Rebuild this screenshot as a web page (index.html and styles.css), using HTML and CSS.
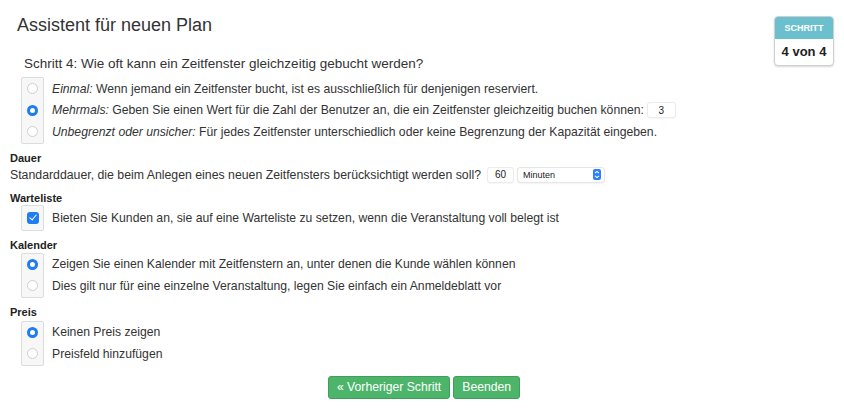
FILE: index.html
```html
<!DOCTYPE html>
<html lang="de">
<head>
<meta charset="UTF-8">
<meta name="viewport" content="width=device-width, initial-scale=1.0">
<title>Assistent für neuen Plan</title>
<link rel="stylesheet" href="styles.css">
</head>
<body>
<div class="page">

  <!-- Step indicator -->
  <div class="stepBox">
    <div class="stepHead">SCHRITT</div>
    <div class="stepBody">4 von 4</div>
  </div>

  <h1 class="title">Assistent für neuen Plan</h1>

  <div class="question">Schritt 4: Wie oft kann ein Zeitfenster gleichzeitig gebucht werden?</div>
  <div class="choices first">
    <div class="marks">
      <div class="mark"><input type="radio" name="capacity"></div>
      <div class="mark"><input type="radio" name="capacity" checked></div>
      <div class="mark"><input type="radio" name="capacity"></div>
    </div>
    <div class="texts">
      <div class="row"><em>Einmal:</em>&nbsp;Wenn jemand ein Zeitfenster bucht, ist es ausschließlich für denjenigen reserviert.</div>
      <div class="row"><em>Mehrmals:</em>&nbsp;Geben Sie einen Wert für die Zahl der Benutzer an, die ein Zeitfenster gleichzeitig buchen können: <input class="smallInput users" type="text" value="3"></div>
      <div class="row"><em>Unbegrenzt oder unsicher:</em>&nbsp;Für jedes Zeitfenster unterschiedlich oder keine Begrenzung der Kapazität eingeben.</div>
    </div>
  </div>

  <div class="label">Dauer</div>
  <div class="line">Standarddauer, die beim Anlegen eines neuen Zeitfensters berücksichtigt werden soll? <input class="smallInput duration" type="text" value="60">
    <span class="select">Minuten
      <svg width="8" height="11" viewBox="0 0 8 11"><rect width="8" height="11" rx="2" fill="#2d7ff9"/><path d="M2 4.2 L4 2.4 L6 4.2 M2 6.8 L4 8.6 L6 6.8" stroke="#fff" stroke-width="1.1" fill="none"/></svg>
    </span>
  </div>

  <div class="label">Warteliste</div>
  <div class="choices tight">
    <div class="marks">
      <div class="mark tall"><input type="checkbox" checked></div>
    </div>
    <div class="texts">
      <div class="row tall">Bieten Sie Kunden an, sie auf eine Warteliste zu setzen, wenn die Veranstaltung voll belegt ist</div>
    </div>
  </div>

  <div class="label">Kalender</div>
  <div class="choices">
    <div class="marks">
      <div class="mark"><input type="radio" name="calendar" checked></div>
      <div class="mark"><input type="radio" name="calendar"></div>
    </div>
    <div class="texts">
      <div class="row">Zeigen Sie einen Kalender mit Zeitfenstern an, unter denen die Kunde wählen können</div>
      <div class="row">Dies gilt nur für eine einzelne Veranstaltung, legen Sie einfach ein Anmeldeblatt vor</div>
    </div>
  </div>

  <div class="label">Preis</div>
  <div class="choices loose">
    <div class="marks">
      <div class="mark"><input type="radio" name="price" checked></div>
      <div class="mark"><input type="radio" name="price"></div>
    </div>
    <div class="texts">
      <div class="row">Keinen Preis zeigen</div>
      <div class="row">Preisfeld hinzufügen</div>
    </div>
  </div>

  <div class="buttons">
    <button class="greenButton">« Vorheriger Schritt</button>
    <button class="greenButton">Beenden</button>
  </div>

</div>
</body>
</html>
```

FILE: styles.css
```css
body {
  margin: 0;
  padding: 0;
  background-color: #fff;
  font-family: "Liberation Sans", Arial, Helvetica, sans-serif;
  color: #333;
}

.page {
  padding: 0 10px 0 10px;
}

/* Step box in the top right corner */
.stepBox {
  float: right;
  margin-top: 16px;
  width: 58px;
  border: 1px solid #cfcfcf;
  border-radius: 4px;
  box-shadow: 0 1px 2px rgba(0, 0, 0, 0.15);
  overflow: hidden;
  text-align: center;
  background-color: #fff;
}
.stepHead {
  background-color: #6cbfcd;
  color: #fff;
  font-size: 9px;
  font-weight: bold;
  line-height: 22px;
}
.stepBody {
  font-size: 13px;
  font-weight: bold;
  line-height: 26px;
  color: #222;
}

.title {
  margin: 0;
  padding: 14px 0 0 7px;
  font-size: 18px;
  line-height: 22px;
  font-weight: normal;
  color: #333;
}

.question {
  margin: 20px 0 0 14px;
  font-size: 13.5px;
  line-height: 16px;
}

/* Radio / checkbox groups */
.choices {
  display: flex;
  margin-left: 11px;
  margin-top: 1px;
  font-size: 12.2px;
}
.choices.first {
  margin-top: 5px;
}
.choices.tight {
  margin-top: 0;
}
.choices.loose {
  margin-top: 2px;
}
.marks {
  width: 21px;
  background-color: #f7f7f7;
  border: 1px solid #dcdcdc;
  border-radius: 2px;
}
.mark {
  height: 21.5px;
  display: flex;
  align-items: center;
  justify-content: center;
}
.texts {
  margin-left: 8px;
  padding-top: 1px;
}
.row {
  height: 21.5px;
  display: flex;
  align-items: center;
  white-space: nowrap;
}
.mark.tall, .row.tall {
  height: 24px;
}

input[type="radio"] {
  appearance: none;
  -webkit-appearance: none;
  margin: 0;
  width: 11px;
  height: 11px;
  border-radius: 50%;
  border: 1px solid #cfcfcf;
  background-color: #fff;
}
input[type="radio"]:checked {
  border: 3px solid #1f7cf2;
  background-color: #fff;
}
input[type="checkbox"] {
  appearance: none;
  -webkit-appearance: none;
  margin: 0;
  width: 12px;
  height: 12px;
  border-radius: 3px;
  background-color: #1f7cf2;
  position: relative;
}
input[type="checkbox"]:checked::after {
  content: "";
  position: absolute;
  left: 4px;
  top: 1px;
  width: 3px;
  height: 6px;
  border: solid #fff;
  border-width: 0 1.5px 1.5px 0;
  transform: rotate(40deg);
}

.smallInput {
  font-family: "Liberation Sans", Arial, sans-serif;
  font-size: 10px;
  color: #222;
  text-align: center;
  border: none;
  border-radius: 2px;
  box-shadow: 0 0 0 1px #ececec, 0 1px 2px rgba(0, 0, 0, 0.12);
  height: 14px;
  padding: 0;
  margin-left: 4px;
  background-color: #fff;
}
.users {
  width: 27px;
}
.duration {
  width: 25px;
  margin-left: 7px;
}

.label {
  font-size: 11px;
  font-weight: bold;
  margin-top: 8px;
  line-height: 13px;
  color: #222;
}
.line {
  font-size: 12.3px;
  line-height: 18px;
  margin-top: 1px;
  display: flex;
  align-items: center;
  white-space: nowrap;
}
.select {
  display: inline-flex;
  align-items: center;
  justify-content: space-between;
  margin-left: 5px;
  width: 78px;
  height: 14px;
  padding: 0 3px 0 5px;
  font-size: 9px;
  color: #222;
  background-color: #fff;
  border-radius: 3px;
  box-shadow: 0 0 0 1px #e6e6e6, 0 1px 2px rgba(0, 0, 0, 0.15);
}

/* Buttons at the bottom */
.buttons {
  display: flex;
  justify-content: center;
  gap: 3px;
  margin-top: 10px;
  padding-left: 4px;
}
.greenButton {
  font-family: "Liberation Sans", Arial, sans-serif;
  font-size: 12.2px;
  color: #fff;
  background-color: #4cb56a;
  border: 1px solid #3f9e59;
  border-radius: 3px;
  height: 23px;
  padding: 0 8px;
  cursor: pointer;
}
.greenButton:hover {
  background-color: #44a45f;
}
```
